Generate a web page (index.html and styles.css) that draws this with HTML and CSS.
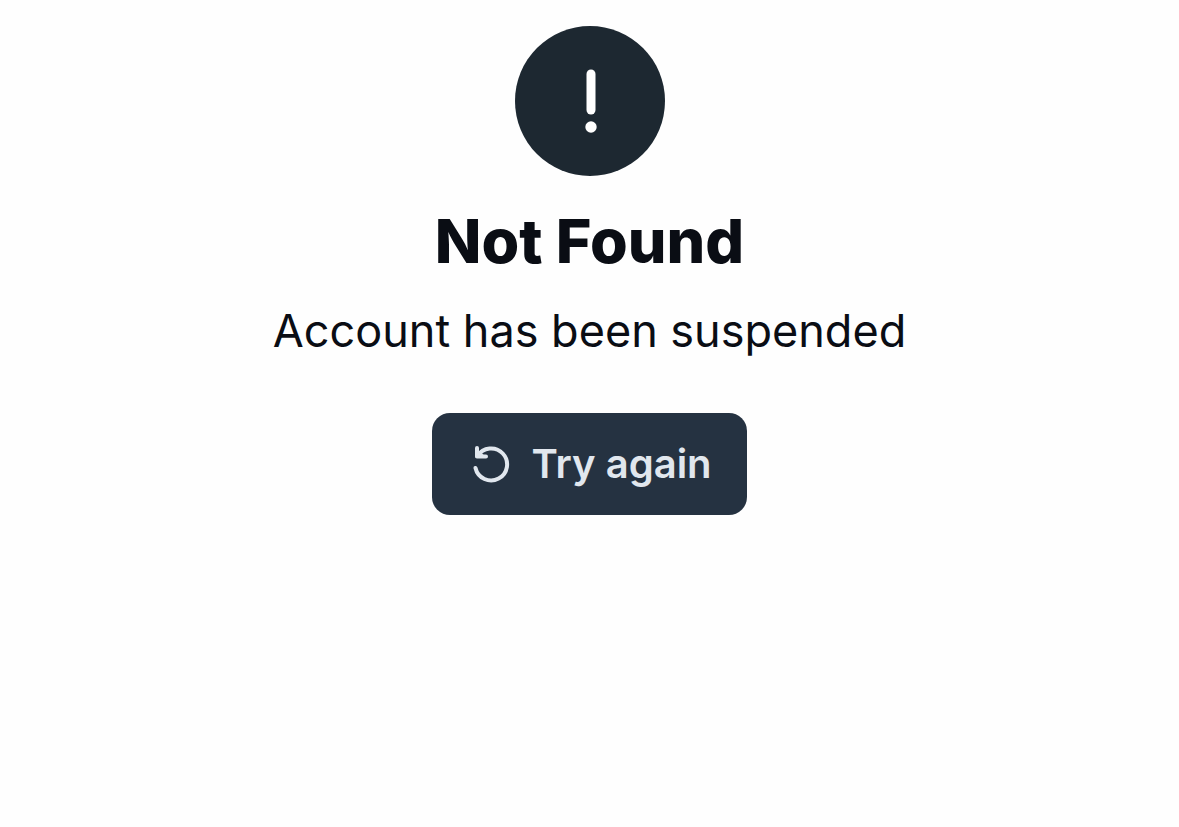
FILE: index.html
```html
<!DOCTYPE html>
<html lang="en">
<head>
  <meta charset="UTF-8">
  <meta name="viewport" content="width=device-width, initial-scale=1">
  <title>Not Found</title>
  <link rel="stylesheet" href="styles.css">
</head>
<body>
<main class="error-page">
  <svg class="error-icon" viewBox="0 0 150 150" aria-hidden="true">
    <circle cx="75" cy="75" r="75" fill="#1d2831"/>
    <path d="M76 48v36" stroke="#fff" stroke-width="9" stroke-linecap="round"/>
    <circle cx="76" cy="101" r="5.7" fill="#fff"/>
  </svg>
  <h1 class="error-title">Not Found</h1>
  <p class="error-text">Account has been suspended</p>
  <button type="button" class="retry-btn">
    <svg class="retry-icon" viewBox="0 0 40 40" aria-hidden="true">
      <path d="M6 4v8.500h9M6.500 12A16 16 0 1 1 4.500 24"/>
      <path d="M6 8v4h5z"/>
    </svg>
    Try again
  </button>
</main>
</body>
</html>
```

FILE: styles.css
```css
*{
  box-sizing: border-box;
}
body{
  margin: 0;
  font-family: Inter, "Liberation Sans", sans-serif;
  color: #0a0d14;
  background: #fefefe;
}
.error-page{
  display: flex;
  flex-direction: column;
  align-items: center;
  padding: 26px 24px;
  text-align: center;
}
.error-icon{
  width: 150px;
  height: 150px;
}
.error-title{
  margin: 27px 0 0;
  font-size: 61px;
  font-weight: 800;
  line-height: 76px;
}
.error-text{
  margin: 20px 0 0;
  font-size: 45px;
  line-height: 64px;
}
.retry-btn{
  display: flex;
  align-items: center;
  gap: 20px;
  margin-top: 50px;
  padding: 26px 35px 26px 39px;
  border: 0;
  border-radius: 18px;
  background: #253241;
  color: #e1e7ee;
  font-family: inherit;
  font-size: 40px;
  font-weight: 600;
  line-height: 50px;
  cursor: pointer;
}
.retry-icon{
  width: 40px;
  height: 40px;
  fill: none;
  stroke: currentColor;
  stroke-width: 4;
  stroke-linecap: round;
  stroke-linejoin: round;
}
```
